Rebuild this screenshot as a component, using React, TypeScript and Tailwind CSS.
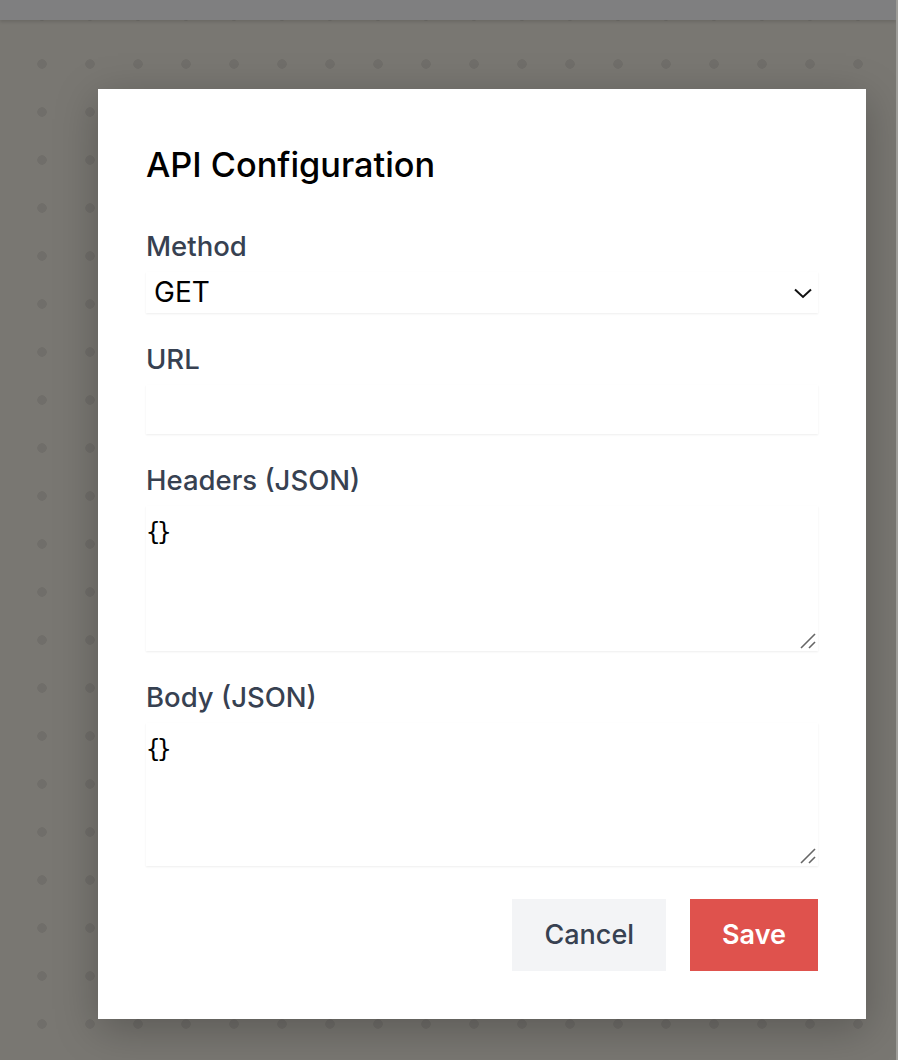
import React, { useState } from 'react';

const Field = ({ label, children }: { label: string; children: React.ReactNode }) => (
  <div className="flex flex-col">
    <label className="text-[27.5px] leading-[32px] font-medium text-[#374151] mb-[10px]">{label}</label>
    {children}
  </div>
);

// the big resize grip drawn over the corner of a textarea
const Grip = () => (
  <svg className="absolute right-[2px] bottom-[2px] pointer-events-none" width="16" height="16" viewBox="0 0 16 16">
    <path d="M1 15L15 1" stroke="#666" strokeWidth="1.6" />
    <path d="M9 15L15 9" stroke="#666" strokeWidth="1.6" />
  </svg>
);

const ApiConfigModal = () => {
  const [method, setMethod] = useState('GET');
  const [url, setUrl] = useState('');
  const [headers, setHeaders] = useState('{}');
  const [body, setBody] = useState('{}');

  const fieldClass =
    'w-full bg-white outline-none shadow-[0_1px_2px_rgba(0,0,0,0.07)] text-black';
  const areaClass = `${fieldClass} block resize-none pt-[11px] px-0 text-[24px] leading-[30px] font-medium tracking-[-3.5px] font-['DejaVu_Sans_Mono',monospace]`;

  return (
    <div className="w-[768px] bg-white shadow-[0_10px_40px_rgba(0,0,0,0.25)] px-12 pt-[56px] pb-12 flex flex-col">
      <h2 className="text-[34.3px] leading-[40px] font-medium text-black mb-[45px]">API Configuration</h2>

      <div className="flex flex-col gap-[30px]">
        <Field label="Method">
          <div className="relative">
            <select
              value={method}
              onChange={(e) => setMethod(e.target.value)}
              className={`${fieldClass} appearance-none h-[41px] pl-[8px] text-[28px] leading-[41px]`}
            >
              <option>GET</option>
              <option>POST</option>
              <option>PUT</option>
              <option>DELETE</option>
            </select>
            <svg
              className="absolute right-[6px] top-[16px] pointer-events-none"
              width="18"
              height="11"
              viewBox="0 0 18 11"
              fill="none"
            >
              <path d="M1 1.5L9 9L17 1.5" stroke="#111" strokeWidth="2" />
            </svg>
          </div>
        </Field>

        <Field label="URL">
          <input
            value={url}
            onChange={(e) => setUrl(e.target.value)}
            className={`${fieldClass} h-[49px] px-2 text-[26px]`}
          />
        </Field>

        <Field label="Headers (JSON)">
          <div className="relative">
            <textarea value={headers} onChange={(e) => setHeaders(e.target.value)} className={`${areaClass} h-[145px]`} />
            <Grip />
          </div>
        </Field>

        <Field label="Body (JSON)">
          <div className="relative">
            <textarea value={body} onChange={(e) => setBody(e.target.value)} className={`${areaClass} h-[143px]`} />
            <Grip />
          </div>
        </Field>
      </div>

      <div className="flex justify-end gap-6 mt-[33px]">
        <button className="h-[72px] px-8 bg-[#f3f4f6] text-[#374151] text-[27px] font-medium">Cancel</button>
        <button className="h-[72px] px-8 bg-[#df524d] text-white text-[27px] font-semibold">Save</button>
      </div>
    </div>
  );
};

export default function App() {
  return (
    <div className="w-[898px] h-[1060px] overflow-hidden flex flex-col bg-[#797772] font-['Inter','Noto_Sans',sans-serif] border-r-2 border-[#9d9c98]">
      <div className="h-5 shrink-0 bg-[#7f7f80] shadow-[0_2px_3px_rgba(0,0,0,0.12)] relative z-10" />
      <div className="flex-1 bg-[radial-gradient(circle,#706e6a_4.5px,transparent_5px)] bg-[length:48px_48px] bg-[position:18px_-28px] pl-[98px] pt-[69px]">
        <ApiConfigModal />
      </div>
    </div>
  );
}
